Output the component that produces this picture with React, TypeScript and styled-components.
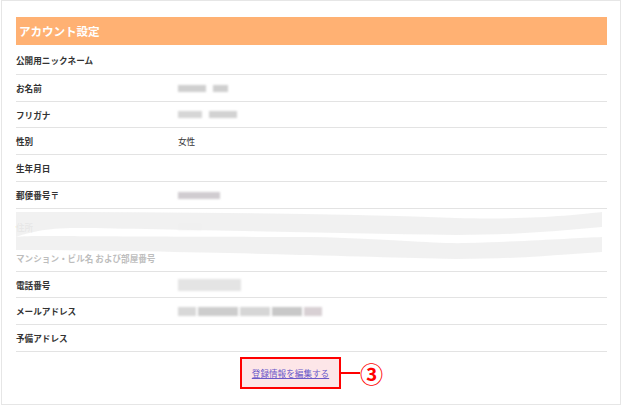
import React from "react";
import styled, { createGlobalStyle } from "styled-components";

const GlobalStyle = createGlobalStyle`
  html, body {
    margin: 0;
    padding: 0;
    background: #fff;
  }
  body {
    font-family: "Noto Sans CJK JP", "Noto Sans", sans-serif;
    color: #333;
  }
`;

// outer frame with the thin grey border
const Frame = styled.div`
  box-sizing: border-box;
  width: 620px;
  height: 405px;
  margin-left: 1px;
  border: 1px solid #e6e6e6;
  padding: 16px 13px 0 14px;
`;

const Header = styled.h2`
  margin: 0;
  height: 28px;
  display: flex;
  align-items: center;
  padding-left: 3px;
  background: #ffb173;
  color: #fff;
  font-size: 11.6px;
  font-weight: bold;
  letter-spacing: -0.1px;
`;

const List = styled.div`
  display: flex;
  flex-direction: column;
`;

const Row = styled.div<{ $h: number; $noLine?: boolean }>`
  box-sizing: border-box;
  display: grid;
  grid-template-columns: 162px 1fr;
  align-items: center;
  height: ${(p) => p.$h}px;
  border-bottom: 1px solid ${(p) => (p.$noLine ? "transparent" : "#e3e3e3")};
  font-size: 8.6px;
`;

const Label = styled.span`
  font-weight: bold;
  color: #333;
  white-space: nowrap;
`;

const Value = styled.span<{ $gap?: number }>`
  display: flex;
  align-items: center;
  gap: ${(p) => p.$gap ?? 7}px;
  color: #333;
`;

// blurred personal data
const Blur = styled.span<{ $w: number; $hh?: number; $c?: string }>`
  display: inline-block;
  width: ${(p) => p.$w}px;
  height: ${(p) => p.$hh ?? 7}px;
  background: ${(p) => p.$c ?? "#cfcfcf"};
  filter: blur(1.2px);
`;

// torn part: address rows covered by a wavy overlay
const Torn = styled.div`
  position: relative;
`;

const Waves = styled.svg`
  position: absolute;
  left: 0;
  top: 2px;
  width: 586px;
  height: 52px;
  pointer-events: none;
`;

const Actions = styled.div`
  display: flex;
  justify-content: center;
  align-items: center;
  margin-top: 5px;
`;

const EditBox = styled.div`
  box-sizing: border-box;
  width: 101px;
  height: 32px;
  border: 2px solid #f00;
  background: #fde6e8;
  display: flex;
  align-items: center;
  justify-content: center;
`;

const EditLink = styled.a`
  font-size: 8.6px;
  color: #6a58c8;
  text-decoration: underline;
  white-space: nowrap;
  cursor: pointer;
`;

const Connector = styled.span`
  width: 19px;
  height: 2px;
  background: #f00;
`;

const Marker = styled.span`
  font-size: 23px;
  line-height: 1;
  font-weight: bold;
  color: #f00;
`;

const App: React.FC = () => {
  return (
    <>
      <GlobalStyle />
      <Frame>
        <Header>アカウント設定</Header>
        <List>
          <Row $h={30}>
            <Label>公開用ニックネーム</Label>
            <Value />
          </Row>
          <Row $h={27}>
            <Label>お名前</Label>
            <Value>
              <Blur $w={28} />
              <Blur $w={15} />
            </Value>
          </Row>
          <Row $h={26}>
            <Label>フリガナ</Label>
            <Value>
              <Blur $w={24} $c="#d6d6d6" />
              <Blur $w={28} $c="#d2d2d2" />
            </Value>
          </Row>
          <Row $h={27}>
            <Label>性別</Label>
            <Value>女性</Value>
          </Row>
          <Row $h={27}>
            <Label>生年月日</Label>
            <Value />
          </Row>
          <Row $h={27}>
            <Label>郵便番号〒</Label>
            <Value>
              <Blur $w={42} $c="#d0ccd0" />
            </Value>
          </Row>
          <Torn>
            <Row $h={36} $noLine>
              <Label>住所</Label>
              <Value>
                <Blur $w={24} $c="#d8d8d8" />
              </Value>
            </Row>
            <Row $h={27}>
              <Label>マンション・ビル名 および部屋番号</Label>
              <Value />
            </Row>
            <Waves viewBox="0 0 586 52" preserveAspectRatio="none">
              <rect x="0" y="0" width="586" height="52" fill="#fff" opacity="0.68" />
              <path
                d="M0,1 C150,1 300,2 440,7 C510,9 560,4 586,1 L586,16 C540,20 500,24 440,24 C300,22 150,18 60,17 C30,17 10,22 0,26 Z"
                fill="#efefef"
                opacity="0.85"
              />
              <path
                d="M0,26 C20,24 50,26 295,26 C380,28 420,33 450,32 C520,30 560,27 586,26 L586,41 C540,44 500,48 440,48 C340,46 200,40 0,39 Z"
                fill="#efefef"
                opacity="0.85"
              />
            </Waves>
          </Torn>
          <Row $h={26}>
            <Label>電話番号</Label>
            <Value>
              <Blur $w={63} $hh={12} $c="#e4e4e4" />
            </Value>
          </Row>
          <Row $h={27}>
            <Label>メールアドレス</Label>
            <Value $gap={2}>
              <Blur $w={18} $hh={9} $c="#d8d8d8" />
              <Blur $w={40} $hh={9} $c="#cdcdcd" />
              <Blur $w={30} $hh={9} $c="#d6d6d6" />
              <Blur $w={30} $hh={9} $c="#c8c8c8" />
              <Blur $w={18} $hh={9} $c="#d8d0d4" />
            </Value>
          </Row>
          <Row $h={27}>
            <Label>予備アドレス</Label>
            <Value />
          </Row>
        </List>
        <Actions>
          <EditBox>
            <EditLink>登録情報を編集する</EditLink>
          </EditBox>
          <Connector />
          <Marker>③</Marker>
        </Actions>
      </Frame>
    </>
  );
};

export default App;
